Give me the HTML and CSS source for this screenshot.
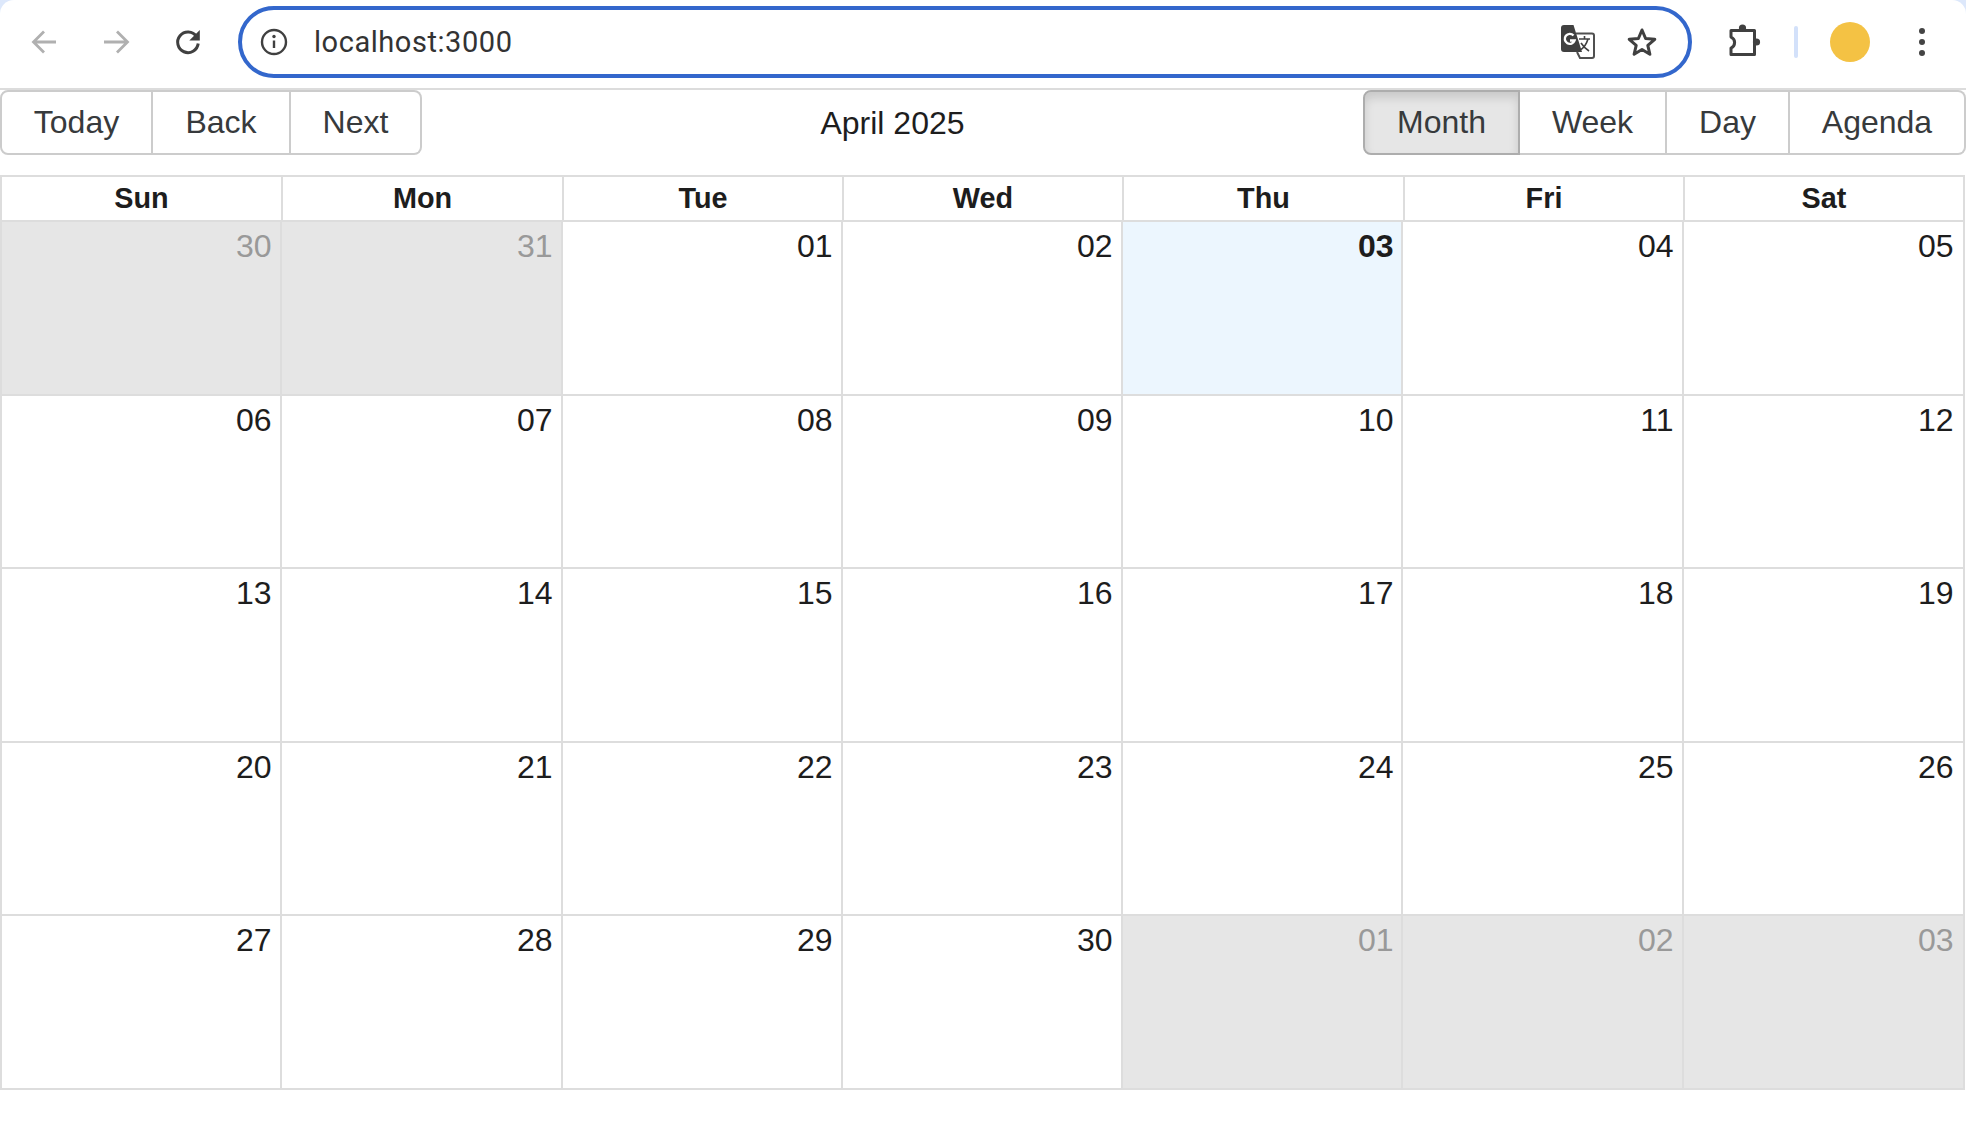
FILE: index.html
```html
<!DOCTYPE html>
<html lang="en">
<head>
<meta charset="utf-8">
<title>Calendar</title>
<link rel="stylesheet" href="styles.css">
</head>
<body>
<div class="window-top">
<header class="browser">
  <div class="nav">
    <svg class="nav-icon" viewBox="0 0 30 30"><path class="dim" d="M26 15H4M14 4.500L3.500 15 14 25.500"/></svg>
    <svg class="nav-icon" viewBox="0 0 30 30"><path class="dim" d="M3 15h23M16 4.500L26.500 15 16 25.500"/></svg>
    <svg class="nav-icon" viewBox="0 0 30 30"><path class="dark thick-round" d="M24.500 9.500A10.300 10.300 0 1 0 26.200 16.500"/><path class="solid" d="M27.800 3v10.500H17.300z"/></svg>
  </div>
  <div class="omnibox">
    <svg class="info" viewBox="0 0 28 28"><circle class="dark" cx="14" cy="14" r="12"/><path class="dark" d="M14 12.500V20"/><circle class="solid" cx="14" cy="8.500" r="1.700"/></svg>
    <span class="url">localhost:3000</span>
    <svg class="translate" viewBox="0 0 36 36"><path class="solid" d="M4 1h9.500L22 28H4a3 3 0 0 1-3-3V4a3 3 0 0 1 3-3z"/><path class="frame" d="M16 9.500h16a2 2 0 0 1 2 2V32a2 2 0 0 1-2 2H20l-3-6"/><path class="glyph-w" d="M13.500 11.500a5 5 0 1 0 1 5h-4.500"/><path class="glyph-d" d="M19 15h11M24.500 12v3M28 15c-1.500 5-4 9-8 11M21 19c2 3 5 6 8 8"/></svg>
    <svg class="star" viewBox="0 0 32 32"><path class="dark thick" d="M16 4l3.600 8.500 9.200.8-7 6 2.100 9L16 23.500 8.100 28.300l2.100-9-7-6 9.200-.8z"/></svg>
  </div>
  <div class="actions">
    <svg class="puzzle" viewBox="0 0 34 34"><path class="dark thick" d="M5 5.500H28.500V29.500H5V23a6 6 0 0 0 0-11z"/><circle class="solid" cx="16.500" cy="3" r="3.600"/><circle class="solid" cx="30.500" cy="17" r="3.600"/></svg>
    <span class="divider"></span>
    <span class="avatar"></span>
    <span class="menu"><i></i><i></i><i></i></span>
  </div>
</header>
</div>

<main class="calendar">
  <div class="toolbar">
    <div class="btn-group">
      <button class="btn btn-today">Today</button>
      <button class="btn btn-back">Back</button>
      <button class="btn btn-next">Next</button>
    </div>
    <div class="label">April 2025</div>
    <div class="btn-group">
      <button class="btn btn-month active">Month</button>
      <button class="btn btn-week">Week</button>
      <button class="btn btn-day">Day</button>
      <button class="btn btn-agenda">Agenda</button>
    </div>
  </div>

  <div class="month">
    <div class="head">
      <div class="hcell">Sun</div><div class="hcell">Mon</div><div class="hcell">Tue</div><div class="hcell">Wed</div><div class="hcell">Thu</div><div class="hcell">Fri</div><div class="hcell">Sat</div>
    </div>
    <div class="week">
      <div class="week-bg"><div class="bg off"></div><div class="bg off"></div><div class="bg"></div><div class="bg"></div><div class="bg today"></div><div class="bg"></div><div class="bg"></div></div>
      <div class="date off">30</div><div class="date off">31</div><div class="date">01</div><div class="date">02</div><div class="date today">03</div><div class="date">04</div><div class="date">05</div>
    </div>
    <div class="week">
      <div class="week-bg"><div class="bg"></div><div class="bg"></div><div class="bg"></div><div class="bg"></div><div class="bg"></div><div class="bg"></div><div class="bg"></div></div>
      <div class="date">06</div><div class="date">07</div><div class="date">08</div><div class="date">09</div><div class="date">10</div><div class="date">11</div><div class="date">12</div>
    </div>
    <div class="week">
      <div class="week-bg"><div class="bg"></div><div class="bg"></div><div class="bg"></div><div class="bg"></div><div class="bg"></div><div class="bg"></div><div class="bg"></div></div>
      <div class="date">13</div><div class="date">14</div><div class="date">15</div><div class="date">16</div><div class="date">17</div><div class="date">18</div><div class="date">19</div>
    </div>
    <div class="week">
      <div class="week-bg"><div class="bg"></div><div class="bg"></div><div class="bg"></div><div class="bg"></div><div class="bg"></div><div class="bg"></div><div class="bg"></div></div>
      <div class="date">20</div><div class="date">21</div><div class="date">22</div><div class="date">23</div><div class="date">24</div><div class="date">25</div><div class="date">26</div>
    </div>
    <div class="week">
      <div class="week-bg"><div class="bg"></div><div class="bg"></div><div class="bg"></div><div class="bg"></div><div class="bg off"></div><div class="bg off"></div><div class="bg off"></div></div>
      <div class="date">27</div><div class="date">28</div><div class="date">29</div><div class="date">30</div><div class="date off">01</div><div class="date off">02</div><div class="date off">03</div>
    </div>
  </div>
</main>
</body>
</html>
```

FILE: styles.css
```css
* { box-sizing: border-box; }
html, body { margin: 0; padding: 0; height: 100%; background: #fff; overflow: hidden; }
body { font-family: "Liberation Sans", Arial, sans-serif; color: #1d1d1d; }

/* browser chrome */
.window-top { background: #dde8fb; }
.browser { display: flex; align-items: center; height: 90px; border-bottom: 2px solid #dcdcdc; border-radius: 14px 14px 0 0; padding-bottom: 4px; background: #fff; }
.nav { display: flex; align-items: center; gap: 41px; padding-left: 30px; width: 238px; }
.nav-icon { width: 30px; height: 30px; flex: none; }
.omnibox { display: flex; align-items: center; width: 1454px; height: 72px; border: 4px solid #3367cc; border-radius: 36px; padding: 0 30px 0 18px; }
.info { width: 28px; height: 28px; flex: none; }
.url { flex: 1; margin-left: 26px; font-family: Roboto, sans-serif; font-size: 29px; letter-spacing: .55px; color: #333; }
.translate { width: 36px; height: 36px; flex: none; margin-right: 30px; }
.star { width: 32px; height: 32px; flex: none; }
.actions { display: flex; align-items: center; padding-left: 34px; }
.puzzle { width: 34px; height: 34px; flex: none; overflow: visible; }
.divider { width: 4px; height: 32px; margin-left: 34px; background: #d3e1fa; border-radius: 2px; }
.avatar { width: 40px; height: 40px; margin-left: 32px; border-radius: 50%; background: #f4c244; }
.menu { display: flex; flex-direction: column; gap: 4.5px; margin-left: 48.500px; }
.menu i { width: 6.500px; height: 6.500px; border-radius: 50%; background: #444; }

svg path, svg circle { fill: none; }
svg .dim { stroke: #b0b0b0; stroke-width: 2.8; }
svg .dark { stroke: #404040; stroke-width: 2.4; }
svg .thick { stroke-width: 3; stroke-linejoin: round; }
svg .thick-round { stroke-width: 3; }
svg .solid { fill: #404040; stroke: none; }
svg .frame { stroke: #505050; stroke-width: 2; }
svg .glyph-w { stroke: #fff; stroke-width: 2.4; }
svg .glyph-d { stroke: #404040; stroke-width: 1.6; }

/* calendar */
.calendar { display: flex; flex-direction: column; }
.toolbar { display: flex; align-items: center; height: 65px; margin-bottom: 20px; }
.label { flex: 1; text-align: center; font-size: 32px; padding-top: 1px; color: #1d1d1d; }
.btn-group { display: flex; height: 65px; }
.btn { font: inherit; font-size: 32px; color: #373a3c; background: #fff; border: 2px solid #ccc; border-left-width: 0; padding: 0; margin: 0; }
.btn-group .btn:first-child { border-left-width: 2px; border-radius: 8px 0 0 8px; }
.btn-group .btn:last-child { border-radius: 0 8px 8px 0; }
.btn-today { width: 153px; }
.btn-back { width: 138px; }
.btn-next { width: 131px; }
.btn-month { width: 157px; }
.btn-week { width: 147px; }
.btn-day { width: 123px; }
.btn-agenda { width: 176px; }
.btn.active { background: #e6e6e6; border-color: #adadad; box-shadow: inset 0 6px 10px rgba(0,0,0,.125); }

.month { display: flex; flex-direction: column; height: 915px; margin-right: 1px; border: solid #ddd; border-width: 2px 2px 2px 0; }
.head, .week { display: grid; grid-template-columns: repeat(2, 281fr) repeat(2, 280fr) 281fr repeat(2, 280fr); }
.head { height: 45px; flex: none; }
.hcell { display: flex; align-items: center; justify-content: center; font-weight: 700; font-size: 28.8px; border-left: 2px solid #ddd; border-bottom: 2px solid #ddd; }
.week { position: relative; flex: 1; align-content: start; border-top: 2px solid #ddd; }
.head + .week { border-top: 0; }
.week-bg { position: absolute; inset: 0; display: grid; grid-template-columns: 280fr 281fr 280fr 280fr 280fr 281fr 281fr; }
.bg { border-left: 2px solid #ddd; }
.bg.off { background: #e6e6e6; }
.bg.today { background: #ecf6fe; }
.date { position: relative; padding: 6px 9.5px 0 0; text-align: right; font-size: 32px; line-height: 36px; }
.date.off { color: #999; }
.date.today { font-weight: 700; }
```
